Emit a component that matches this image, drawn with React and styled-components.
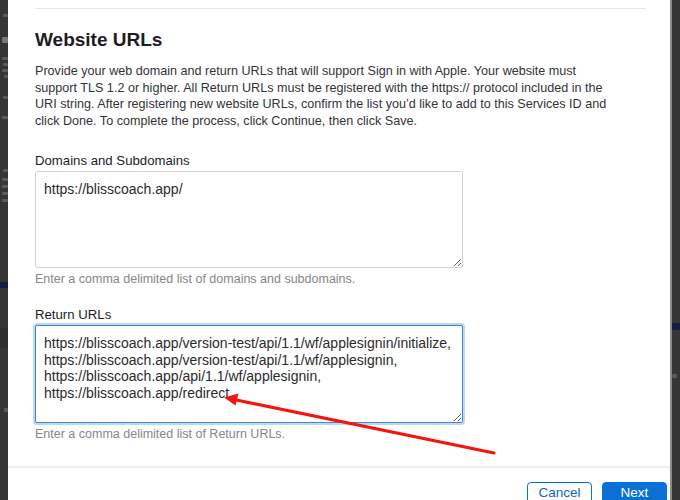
import React from "react";
import styled, { createGlobalStyle } from "styled-components";

const Global = createGlobalStyle`
  html, body { margin: 0; padding: 0; }
  body {
    width: 680px;
    height: 500px;
    overflow: hidden;
    background: #343434;
    font-family: "Liberation Sans", Arial, sans-serif;
  }
`;

const Screen = styled.div`
  position: relative;
  width: 680px;
  height: 500px;
  display: grid;
  grid-template-columns: 8px 662px 10px;
  overflow: hidden;
`;

const Backdrop = styled.div`
  background: #353535;
  display: flex;
  flex-direction: column;
  align-items: ${(p) => (p.$side === "right" ? "flex-start" : "flex-end")};
  overflow: hidden;
  border-left: ${(p) => (p.$side === "right" ? "2px solid #8a8a8a" : "none")};
`;

const Ghost = styled.div`
  flex: none;
  width: ${(p) => p.$w}px;
  height: ${(p) => p.$h}px;
  margin-top: ${(p) => p.$top}px;
  background: ${(p) => p.$c || "#5a5a5a"};
  border-radius: 1px;
  filter: blur(0.6px);
`;

const Dialog = styled.div`
  background: #ffffff;
  display: flex;
  flex-direction: column;
  height: 500px;
  overflow: hidden;
`;

const Body = styled.div`
  padding: 8px 24px 0 27px;
  display: flex;
  flex-direction: column;
`;

const TopRule = styled.div`
  height: 1px;
  background: #e6e6e6;
`;

const Title = styled.h2`
  margin: 19px 0 0;
  font-size: 19px;
  line-height: 24px;
  font-weight: 700;
  color: #1d1d1f;
`;

const Lead = styled.p`
  margin: 11px 0 0;
  font-size: 12.6px;
  line-height: 16.6px;
  color: #333336;
  white-space: nowrap;
`;

const Field = styled.div`
  display: flex;
  flex-direction: column;
  margin-top: ${(p) => p.$top}px;
`;

const Label = styled.label`
  font-size: 13.2px;
  line-height: 17px;
  color: #1d1d1f;
  margin-bottom: 2px;
`;

const Area = styled.textarea`
  box-sizing: border-box;
  width: 428px;
  height: ${(p) => p.$h}px;
  margin: 0;
  padding: 9px 8px 8px;
  resize: vertical;
  font-family: "Liberation Sans", Arial, sans-serif;
  font-size: 14px;
  line-height: 16.4px;
  color: #2b2b2b;
  background: #fff;
  border-radius: 2px;
  outline: none;
  white-space: pre;
  overflow: hidden;
  border: 1px solid ${(p) => (p.$focus ? "#3f86cf" : "#d2d2d7")};
  box-shadow: ${(p) => (p.$focus ? "0 0 0 2px #bcd8f3" : "none")};
`;

const Hint = styled.div`
  margin-top: 3px;
  font-size: 12.5px;
  line-height: 16px;
  color: #86868b;
`;

const Footer = styled.div`
  box-sizing: border-box;
  margin-top: auto;
  border-top: 2px solid #efefef;
  height: 34px;
  flex: none;
  display: flex;
  justify-content: flex-end;
  align-items: flex-start;
  gap: 10px;
  padding: 14px 3px 0 0;
`;

const Button = styled.button`
  box-sizing: border-box;
  flex: none;
  width: 65px;
  height: 34px;
  padding: 0;
  font-family: "Liberation Sans", Arial, sans-serif;
  font-size: 13.5px;
  line-height: 20px;
  border-radius: 4px;
  border: 1px solid #0071e3;
  background: ${(p) => (p.$primary ? "#0b6fd6" : "#ffffff")};
  color: ${(p) => (p.$primary ? "#ffffff" : "#0a66c8")};
  text-align: center;
  display: flex;
  align-items: flex-start;
  justify-content: center;
  padding-top: 0;
`;

const ArrowLayer = styled.svg`
  position: absolute;
  left: 0;
  top: 0;
  pointer-events: none;
`;

export default function App() {
  const returns =
    "https://blisscoach.app/version-test/api/1.1/wf/applesignin/initialize,\nhttps://blisscoach.app/version-test/api/1.1/wf/applesignin,\nhttps://blisscoach.app/api/1.1/wf/applesignin,\nhttps://blisscoach.app/redirect";
  return (
    <>
      <Global />
      <Screen>
        <Backdrop $side="left">
          <Ghost $w={5} $h={3} $top={14} />
          <Ghost $w={6} $h={6} $top={20} $c="#777" />
          <Ghost $w={6} $h={3} $top={14} />
          <Ghost $w={5} $h={3} $top={3} />
          <Ghost $w={6} $h={3} $top={3} />
          <Ghost $w={4} $h={3} $top={3} />
          <Ghost $w={5} $h={3} $top={18} />
          <Ghost $w={6} $h={3} $top={17} />
          <Ghost $w={5} $h={3} $top={50} />
          <Ghost $w={6} $h={3} $top={6} />
          <Ghost $w={6} $h={3} $top={4} />
          <Ghost $w={6} $h={3} $top={4} />
          <Ghost $w={6} $h={3} $top={4} />
          <Ghost $w={8} $h={6} $top={80} $c="#141b45" />
          <Ghost $w={8} $h={20} $top={40} $c="#2e2e2e" />
          <Ghost $w={4} $h={4} $top={60} />
        </Backdrop>
        <Dialog>
          <Body>
            <TopRule />
            <Title>Website URLs</Title>
            <Lead>
              Provide your web domain and return URLs that will support Sign in with Apple. Your website must
              <br />
              support TLS 1.2 or higher. All Return URLs must be registered with the https:// protocol included in the
              <br />
              URI string. After registering new website URLs, confirm the list you’d like to add to this Services ID and
              <br />
              click Done. To complete the process, click Continue, then click Save.
            </Lead>
            <Field $top={23}>
              <Label>Domains and Subdomains</Label>
              <Area $h={97} readOnly value="https://blisscoach.app/" />
              <Hint>Enter a comma delimited list of domains and subdomains.</Hint>
            </Field>
            <Field $top={19}>
              <Label>Return URLs</Label>
              <Area $h={98} $focus readOnly value={returns} />
              <Hint>Enter a comma delimited list of Return URLs.</Hint>
            </Field>
          </Body>
          <Footer>
            <Button>Cancel</Button>
            <Button $primary>Next</Button>
          </Footer>
        </Dialog>
        <Backdrop $side="right">
          <Ghost $w={8} $h={7} $top={323} $c="#141b45" />
          <Ghost $w={5} $h={4} $top={44} />
        </Backdrop>
        <ArrowLayer width="680" height="500" viewBox="0 0 680 500">
          <line x1="494" y1="453" x2="234" y2="399.5" stroke="#f5140f" strokeWidth="3.2" strokeLinecap="round" />
          <polygon points="224,397.5 238.5,393.5 235.5,405.5" fill="#f5140f" />
        </ArrowLayer>
      </Screen>
    </>
  );
}
